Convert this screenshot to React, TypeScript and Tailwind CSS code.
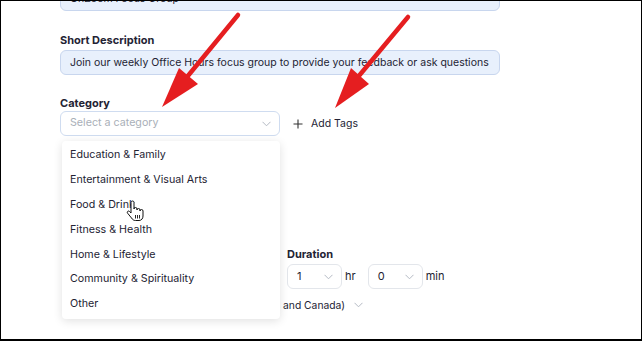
import type { FC } from "react";

const font = { fontFamily: "Inter, 'Noto Sans', sans-serif" };

const categories = [
  "Education & Family",
  "Entertainment & Visual Arts",
  "Food & Drink",
  "Fitness & Health",
  "Home & Lifestyle",
  "Community & Spirituality",
  "Other",
];

// chevron fino de los selects
const Chevron: FC<{ className?: string }> = ({ className = "" }) => (
  <svg width="9" height="6" viewBox="0 0 9 6" className={className}>
    <polyline points="0.5,0.8 4.5,4.8 8.5,0.8" fill="none" stroke="#b4bac4" strokeWidth="1" />
  </svg>
);

const MiniSelect: FC<{ value: string }> = ({ value }) => (
  <div className="flex h-[25px] w-[55px] items-center justify-between rounded-[6px] border border-[#e3e6eb] bg-white pl-[9px] pr-[8px] text-[11px] text-[#232333]">
    <span>{value}</span>
    <Chevron />
  </div>
);

// cursor de mano sobre "Food & Drink"
const HandCursor = () => (
  <svg width="19" height="22" viewBox="0 0 19 22" className="absolute left-[125px] top-[199px]">
    <path
      d="M5 2.5 a1.5 1.5 0 0 1 3 0 V9 a1.5 1.5 0 0 1 3 0 V10 a1.5 1.5 0 0 1 3 0 V11 a1.5 1.5 0 0 1 3 0 V16 c0 2.5 -1.5 4.5 -4 4.5 H9.5 c-2 0 -3 -1 -4 -2.5 L1.6 13.2 a1.3 1.3 0 0 1 2 -1.7 L5 13 Z"
      fill="#fff"
      stroke="#111"
      strokeWidth="1"
      strokeLinejoin="round"
    />
    <path d="M9.5 15 V18.5 M11.5 15 V18.5 M13.5 15 V18.5" stroke="#111" strokeWidth="0.9" />
  </svg>
);

const Arrows = () => (
  <svg width="642" height="341" className="pointer-events-none absolute left-0 top-0">
    <g fill="#e51e20" stroke="#e51e20">
      <line x1="237" y1="14" x2="186" y2="76" strokeWidth="4.5" strokeLinecap="round" />
      <polygon points="161,106 178,67 197,83" stroke="none" />
      <line x1="407" y1="16" x2="357" y2="76" strokeWidth="4.5" strokeLinecap="round" />
      <polygon points="334,107 350,67 368,83" stroke="none" />
    </g>
  </svg>
);

export default function App() {
  return (
    <div
      style={font}
      className="relative h-[341px] w-[642px] overflow-hidden border-b-2 border-l border-r border-t border-black bg-white"
    >
      <div className="flex flex-col pl-[59px]">
        <div className="mt-[-15px] flex h-[25px] w-[440px] items-center whitespace-nowrap rounded-[6px] border border-[#c8d6ee] bg-[#e8f0fc] px-[9px] text-[10.5px] text-[#232333]">
          OnZoom Focus Group
        </div>

        <div className="mt-[22px] text-[11px] font-bold leading-[15px] text-[#232333]">Short Description</div>
        <div className="mt-[2px] flex h-[25px] w-[440px] items-center whitespace-nowrap rounded-[6px] border border-[#c8d6ee] bg-[#e8f0fc] px-[9px] text-[10.5px] text-[#232333]">
          Join our weekly Office Hours focus group to provide your feedback or ask questions
        </div>

        <div className="mt-[21px] text-[11px] font-bold leading-[15px] text-[#232333]">Category</div>
        <div className="flex items-center gap-[13px]">
          <div className="flex h-[25px] w-[220px] items-center justify-between rounded-[6px] border border-[#cfdcf0] bg-white pl-[9px] pr-[8px] text-[10.7px] text-[#a9afb8]">
            <span>Select a category</span>
            <Chevron />
          </div>
          <button className="flex items-center gap-[8px] text-[10.5px] text-[#232333]">
            <svg width="10" height="10" viewBox="0 0 10 10">
              <path d="M5 0.5 V9.5 M0.5 5 H9.5" stroke="#333" strokeWidth="1.1" />
            </svg>
            Add Tags
          </button>
        </div>

        <div className="ml-[227px] mt-[111px] flex flex-col">
          <div className="text-[11px] font-bold leading-[15px] text-[#232333]">Duration</div>
          <div className="mt-[2px] flex items-center">
            <MiniSelect value="1" />
            <span className="ml-[3px] mr-[12px] text-[11px] text-[#232333]">hr</span>
            <MiniSelect value="0" />
            <span className="ml-[3px] text-[11px] text-[#232333]">min</span>
          </div>
        </div>

        <div className="mt-[8px] flex items-center gap-[9px] pl-[80px] text-[10.3px] leading-[16px] text-[#232333]">
          <span>(GMT-7:00) Pacific Time (US and Canada)</span>
          <Chevron />
        </div>
      </div>

      {/* menú desplegable de categorías */}
      <div className="absolute left-[61px] top-[140px] h-[178px] w-[218px] rounded-[4px] bg-white pt-[2px] shadow-[0_2px_10px_rgba(0,0,0,0.12)]">
        {categories.map((c) => (
          <div key={c} className="flex h-[24.8px] items-center px-[8px] text-[10.7px] text-[#232333]">
            {c}
          </div>
        ))}
      </div>

      <HandCursor />
      <Arrows />
    </div>
  );
}
